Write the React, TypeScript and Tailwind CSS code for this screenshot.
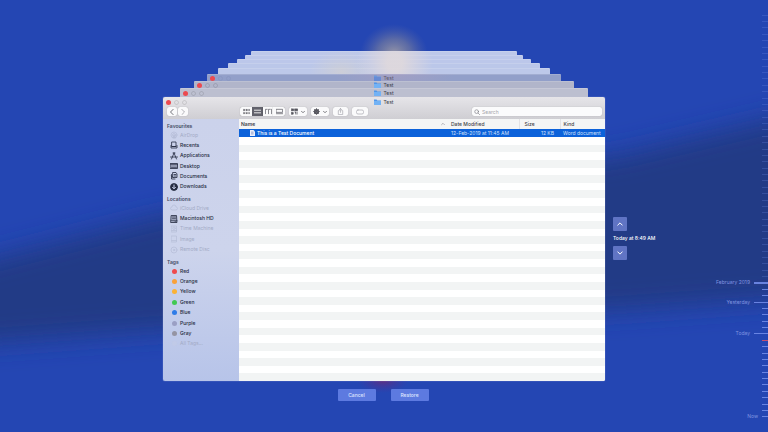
import type { ReactNode } from "react";

type SidebarItem = { label: string; icon: ReactNode; dim?: boolean };

const dot = (cls: string) => <span className={`h-[5px] w-[5px] rounded-full ${cls}`} />;

function Glyph({ children, className = "h-2 w-2" }: { children: ReactNode; className?: string }) {
  return (
    <svg className={`shrink-0 ${className}`} viewBox="0 0 16 16" fill="none" stroke="currentColor" strokeWidth={1.6} strokeLinecap="round" strokeLinejoin="round" aria-hidden="true">
      {children}
    </svg>
  );
}

const favourites: SidebarItem[] = [
  { label: "AirDrop", dim: true, icon: <Glyph><circle cx="8" cy="8" r="6" /><circle cx="8" cy="8" r="3" /><path d="M8 8l-3 6h6z" fill="currentColor" /></Glyph> },
  { label: "Recents", icon: <Glyph><path d="M4 2h8v9H4zM2 9v5h12V9M4 11h8" /></Glyph> },
  { label: "Applications", icon: <Glyph><path d="M8 2L3 14M8 2l5 12M1 10h14M6 2h4" /></Glyph> },
  { label: "Desktop", icon: <Glyph><path d="M1 3h14v10H1z" fill="currentColor" fillOpacity={0.35} /><path d="M1 5h14M3 11h10" strokeWidth={1} /></Glyph> },
  { label: "Documents", icon: <Glyph><path d="M6 1h6l2 3v7H6zM3 5v9h7" /><path d="M8 5h4M8 8h4M3 8l3 3" /></Glyph> },
  { label: "Downloads", icon: <Glyph><circle cx="8" cy="8" r="7" fill="currentColor" /><path d="M8 4v7M5 8.5L8 11.5l3-3" stroke="#ced5ee" strokeWidth={2} /></Glyph> },
];

const locations: SidebarItem[] = [
  { label: "iCloud Drive", dim: true, icon: <Glyph><path d="M4 12a3 3 0 010-6 4 4 0 018 0 3 3 0 010 6z" /></Glyph> },
  { label: "Macintosh HD", icon: <Glyph><path d="M3 1h10l1 14H2z" fill="currentColor" fillOpacity={0.3} /><path d="M2 11h12M5 4h6M5 7h6M10 13h2" strokeWidth={1} /></Glyph> },
  { label: "Time Machine", dim: true, icon: <Glyph><path d="M3 2h10v12H3zM3 11h10" /><circle cx="8" cy="6.5" r="2.5" /></Glyph> },
  { label: "Image", dim: true, icon: <Glyph><path d="M3 2h10v12H3zM3 11h10" /></Glyph> },
  { label: "Remote Disc", dim: true, icon: <Glyph><circle cx="8" cy="8" r="6" /><circle cx="8" cy="8" r="1.5" /></Glyph> },
];

const tags: SidebarItem[] = [
  { label: "Red", icon: dot("bg-[#ee4a4c]") },
  { label: "Orange", icon: dot("bg-[#f9a13a]") },
  { label: "Yellow", icon: dot("bg-[#fbb236]") },
  { label: "Green", icon: dot("bg-[#41c953]") },
  { label: "Blue", icon: dot("bg-[#2e7ce8]") },
  { label: "Purple", icon: dot("bg-[#9a9fc4]") },
  { label: "Gray", icon: dot("bg-[#9594a3]") },
  { label: "All Tags...", dim: true, icon: dot("bg-[#c3cbe6]") },
];

// Older snapshots, furthest first
const snapshots = [
  { cls: "mx-[88px] h-1 bg-[#bdc8ea]" },
  { cls: "mx-[82px] h-1 bg-[#bcc7ea]" },
  { cls: "mx-[74px] h-1 bg-[#bcc7ea]" },
  { cls: "mx-[65px] h-[5px] bg-[#bbc7e9]" },
  { cls: "mx-[55px] h-[6px] bg-[#bdc8e9]" },
  { cls: "mx-[44px] h-[7px] bg-[#929fc9]", faded: true, bar: true },
  { cls: "mx-[31px] h-[7px] bg-[#b1b5ca]", bar: true },
  { cls: "mx-[17px] h-[9px] bg-[#bcbfd0]", bar: true },
];

const TICKS = 64;
const tickLabels: Record<number, string> = { 42: "February 2019", 45: "Yesterday", 50: "Today", 63: "Now" };

function TitleBar({ faded = false }: { faded?: boolean }) {
  return (
    <div className="relative grid h-full grid-cols-3 items-center px-[3px]">
      <div className="flex gap-[3px]">
        <span className="h-[5px] w-[5px] rounded-full bg-[#ec4a50]" />
        <span className={`h-[5px] w-[5px] rounded-full border ${faded ? "border-[#8b98c3]" : "border-black/10"}`} />
        <span className={`h-[5px] w-[5px] rounded-full border ${faded ? "border-[#8b98c3]" : "border-black/10"}`} />
      </div>
      <div className="flex items-center justify-center gap-[2px] text-[5px] leading-none text-[#3c3d4a]">
        <svg className="h-[6px] w-[7px]" viewBox="0 0 14 12" aria-hidden="true">
          <path d="M0 1h5l1.5 2H14v9H0z" fill="#4f97ea" />
          <path d="M0 4h14v8H0z" fill={faded ? "#4f86dd" : "#72b2f5"} />
        </svg>
        Test
      </div>
    </div>
  );
}

function SidebarGroup({ title, items, className }: { title: string; items: SidebarItem[]; className: string }) {
  return (
    <section>
      <h2 className="flex h-2 items-center font-semibold text-[#434a63]">{title}</h2>
      <ul className={`grid auto-rows-fr ${className}`}>
        {items.map((item) => (
          <li key={item.label} className="flex items-center pl-[3px]">
            <a href="#" className={`flex items-center gap-[2px] ${item.dim ? "text-[#a3abc6]" : "font-medium text-[#252b40]"}`}>
              <span className={`flex w-2 justify-center ${item.dim ? "opacity-50" : ""}`}>{item.icon}</span>
              {item.label}
            </a>
          </li>
        ))}
      </ul>
    </section>
  );
}

function ToolButton({ label, children, className = "" }: { label: string; children: ReactNode; className?: string }) {
  return (
    <button type="button" aria-label={label} className={`flex h-[9px] items-center justify-center rounded-[2px] bg-[#fafafb] shadow-[0_0_1px_rgba(0,0,0,0.3)] ${className}`}>
      {children}
    </button>
  );
}

const caret = <Glyph className="h-1 w-1"><path d="M2 5l6 6 6-6" strokeWidth={3} /></Glyph>;

function Toolbar() {
  return (
    <div className="flex h-3 items-start pr-[3px] pl-1 text-[#55555d]">
      <div className="flex w-[73px] gap-px">
        <ToolButton label="Back" className="w-[10px]"><Glyph className="h-[6px] w-[6px]"><path d="M11 1L4 8l7 7" strokeWidth={2.2} /></Glyph></ToolButton>
        <ToolButton label="Forward" className="w-[10px]"><Glyph className="h-[6px] w-[6px] text-[#a2a2a8]"><path d="M5 1l7 7-7 7" strokeWidth={2.2} /></Glyph></ToolButton>
      </div>
      <div className="flex gap-1">
        <div className="flex overflow-hidden rounded-[2px] shadow-[0_0_1px_rgba(0,0,0,0.3)]">
          <ToolButton label="Icon view" className="w-3 rounded-none">
            <Glyph className="h-[7px] w-[7px]"><path d="M1 3h3v3H1zM7 3h3v3H7zM13 3h2v3h-2zM1 10h3v3H1zM7 10h3v3H7zM13 10h2v3h-2z" fill="currentColor" strokeWidth={0.6} /></Glyph>
          </ToolButton>
          <button type="button" aria-label="List view" className="flex h-[9px] w-[11px] items-center justify-center bg-[#62626c] text-white">
            <Glyph className="h-[7px] w-[7px]"><path d="M1 5h14M1 11h14" strokeWidth={2} /></Glyph>
          </button>
          <ToolButton label="Column view" className="w-[10px] rounded-none"><Glyph className="h-[7px] w-[7px]"><path d="M1 13V3h4M8 13V3h4M15 13V3" /></Glyph></ToolButton>
          <ToolButton label="Gallery view" className="w-3 rounded-none"><Glyph className="h-[7px] w-[7px]"><path d="M1 3h14v7H1zM1 13h14" /></Glyph></ToolButton>
        </div>
        <ToolButton label="Group items" className="w-[18px] gap-[3px]">
          <Glyph className="h-[7px] w-[7px]"><path d="M1 2h5v4H1zM9 2h6v4H9zM1 10h4v4H1zM9 9h2v5M14 9v5" fill="currentColor" /></Glyph>
          {caret}
        </ToolButton>
        <ToolButton label="Actions" className="w-[18px] gap-[3px]">
          <Glyph className="h-[7px] w-[7px]"><circle cx="8" cy="8" r="4" strokeWidth={4} /><path d="M8 1v14M1 8h14M3 3l10 10M13 3L3 13" /></Glyph>
          {caret}
        </ToolButton>
        <ToolButton label="Share" className="w-[15px] text-[#a9a9b0]"><Glyph className="h-[7px] w-[7px]"><path d="M5 6H3v9h10V6h-2M8 10V1M5 4l3-3 3 3" /></Glyph></ToolButton>
        <ToolButton label="Edit tags" className="w-4 text-[#b3b3ba]"><Glyph className="h-2 w-2"><rect x="1" y="4" width="14" height="8" rx="3" /></Glyph></ToolButton>
      </div>
      <label className="ml-auto flex h-[9px] w-[130px] items-center gap-[2px] rounded-[2px] bg-[#fbfbfc] pl-[2px] text-[#77777f] shadow-[0_0_1px_rgba(0,0,0,0.3)]">
        <Glyph className="h-[6px] w-[6px]"><circle cx="7" cy="7" r="5" /><path d="M11 11l4 4" /></Glyph>
        <input type="text" placeholder="Search" aria-label="Search" className="min-w-0 flex-1 bg-transparent leading-none outline-none placeholder:text-[#a5a5ab]" />
      </label>
    </div>
  );
}

function FileList() {
  return (
    <div className="flex min-w-0 flex-1 flex-col bg-white">
      <table className="w-full table-fixed border-collapse text-left">
        <colgroup>
          <col />
          <col className="w-[71px]" />
          <col className="w-[41px]" />
          <col className="w-[45px]" />
        </colgroup>
        <thead className="bg-[#f4f5f5] text-[#3f3f47]">
          <tr className="h-[10px]">
            <th scope="col" className="p-0 pl-[2px] font-semibold">
              <div className="flex items-center justify-between pr-[3px]">
                Name
                <Glyph className="h-1 w-1 text-[#8c8c93]"><path d="M2 11l6-6 6 6" strokeWidth={2.4} /></Glyph>
              </div>
            </th>
            <th scope="col" className="p-0 pl-[3px] font-medium">Date Modified</th>
            <th scope="col" className="border-l border-[#e2e2e5] p-0 pl-[5px] font-medium">Size</th>
            <th scope="col" className="border-l border-[#e2e2e5] p-0 pl-[3px] font-medium">Kind</th>
          </tr>
        </thead>
        <tbody>
          <tr className="h-2 bg-[#0c62da] text-[#cfe0fb]">
            <td className="p-0 pl-[11px]">
              <div className="flex items-center gap-[2px] font-medium text-white">
                <svg className="h-[6px] w-[5px]" viewBox="0 0 10 12" aria-hidden="true">
                  <path d="M0 0h7l3 3v9H0z" fill="#e9eefb" />
                  <path d="M2 4h5M2 6h5M2 8h5" stroke="#6d7fb5" />
                </svg>
                This is a Test Document
              </div>
            </td>
            <td className="p-0 pl-[3px] whitespace-nowrap">12-Feb-2019 at 11:45 AM</td>
            <td className="p-0 pr-[6px] text-right">12 KB</td>
            <td className="p-0 pl-[3px] whitespace-nowrap">Word document</td>
          </tr>
        </tbody>
      </table>
      <div className="flex flex-1 flex-col">
        {Array.from({ length: 32 }, (_, i) => (
          <div key={i} className="flex-1 odd:bg-white even:bg-[#f2f4f4]" />
        ))}
      </div>
    </div>
  );
}

function Timeline() {
  return (
    <ol className="flex flex-col py-3 text-[5px] text-[#8095e0]">
      {Array.from({ length: TICKS }, (_, i) => {
        const label = tickLabels[i];
        const long = label && i !== TICKS - 1;
        return (
          <li key={i} className="flex h-0 flex-1 items-center justify-end gap-1 leading-none whitespace-nowrap">
            {label}
            <span
              className={`${long ? "w-[14px]" : "w-[6px]"} ${i === 42 ? "h-[2px]" : "h-px"} ${i === 51 ? "bg-[#d0506c]" : "bg-[#708be8]"}`}
              style={{ opacity: i < 42 ? 0.25 : 0.9 }}
            />
          </li>
        );
      })}
    </ol>
  );
}

function Backdrop() {
  return (
    <svg className="absolute inset-0 h-full w-full" viewBox="0 0 768 432" preserveAspectRatio="none" aria-hidden="true">
      <defs>
        <filter id="soft" x="-20%" y="-50%" width="140%" height="200%"><feGaussianBlur stdDeviation="13" /></filter>
        <radialGradient id="warm"><stop offset="0" stopColor="#b5aca6" stopOpacity="0.8" /><stop offset="0.5" stopColor="#938f98" stopOpacity="0.5" /><stop offset="1" stopColor="#6a70a0" stopOpacity="0" /></radialGradient>
        <radialGradient id="ember"><stop offset="0" stopColor="#6a2a78" stopOpacity="0.8" /><stop offset="1" stopColor="#4a3098" stopOpacity="0" /></radialGradient>
      </defs>
      <rect width="768" height="432" fill="#2446b3" />
      <path d="M-60 272L160 216 400 180 620 155 830 106V295L620 310 400 320 160 330-60 346z" fill="#243a86" filter="url(#soft)" />
      <ellipse cx="394" cy="54" rx="34" ry="30" fill="url(#warm)" />
      <ellipse cx="383" cy="381" rx="26" ry="12" fill="url(#ember)" />
    </svg>
  );
}

export default function App() {
  return (
    <main className="relative grid min-h-screen grid-cols-[163fr_442fr_163fr] overflow-hidden bg-[#2446b3] font-['Inter','Liberation_Sans',sans-serif] text-[5px] leading-none">
      <Backdrop />

      <div className="relative col-start-2 flex flex-col pt-[51px] pb-[31px]">
        <div className="relative">
          {snapshots.map((s, i) => (
            <div key={i} className={`overflow-hidden rounded-t-[1px] border-t border-white/15 ${s.cls}`}>
              {s.bar && <TitleBar faded={s.faded} />}
            </div>
          ))}
          {/* Light falling across the far end of the stack */}
          <div className="pointer-events-none absolute inset-x-[88px] top-0 h-[23px] bg-[radial-gradient(ellipse_38px_44px_at_54%_50%,rgba(224,217,220,0.9)_20%,transparent),radial-gradient(ellipse_32px_22px_at_34%_90%,rgba(214,210,205,0.6),transparent)]" />
          <div className="pointer-events-none absolute inset-x-[88px] top-[23px] h-[7px] bg-[radial-gradient(ellipse_60px_20px_at_54%_0%,rgba(190,160,185,0.35),transparent)]" />
        </div>

        <div className="flex flex-1 flex-col overflow-hidden rounded-[2px] shadow-[0_0_1px_rgba(220,228,255,0.9)]">
          <header className="bg-linear-to-b from-[#e6e5e9] to-[#cfced3]">
            <div className="h-[10px]"><TitleBar /></div>
            <Toolbar />
          </header>
          <div className="flex flex-1">
            <nav aria-label="Sidebar" className="flex w-[76px] flex-col gap-[3px] bg-linear-to-b from-[#cbd2eb] via-[#cdd4ec] to-[#b7c4e9] pt-[3px] pl-1">
              <SidebarGroup title="Favourites" items={favourites} className="h-[62px]" />
              <SidebarGroup title="Locations" items={locations} className="h-[52px]" />
              <SidebarGroup title="Tags" items={tags} className="h-[83px]" />
            </nav>
            <FileList />
          </div>
        </div>

        <div className="mt-2 flex justify-center gap-[15px] pr-[2px] font-medium text-[#dfe6ff]">
          <button type="button" className="h-3 w-[38px] rounded-[1px] bg-[#5d7ae0]">Cancel</button>
          <button type="button" className="h-3 w-[38px] rounded-[1px] bg-[#5d7ae0]">Restore</button>
        </div>
      </div>

      <aside className="relative flex justify-between pl-2">
        <div className="flex flex-col items-start justify-center gap-[5px] pt-[45px] font-medium whitespace-nowrap text-white">
          <button type="button" aria-label="Previous snapshot" className="flex h-[14px] w-[14px] items-center justify-center rounded-[1px] bg-[#6074c4]">
            <Glyph className="h-[6px] w-[6px]"><path d="M2 11l6-6 6 6" strokeWidth={2.6} /></Glyph>
          </button>
          <p>Today at 8:49 AM</p>
          <button type="button" aria-label="Next snapshot" className="flex h-[14px] w-[14px] items-center justify-center rounded-[1px] bg-[#6074c4]">
            <Glyph className="h-[6px] w-[6px]"><path d="M2 5l6 6 6-6" strokeWidth={2.6} /></Glyph>
          </button>
        </div>
        <Timeline />
      </aside>
    </main>
  );
}
